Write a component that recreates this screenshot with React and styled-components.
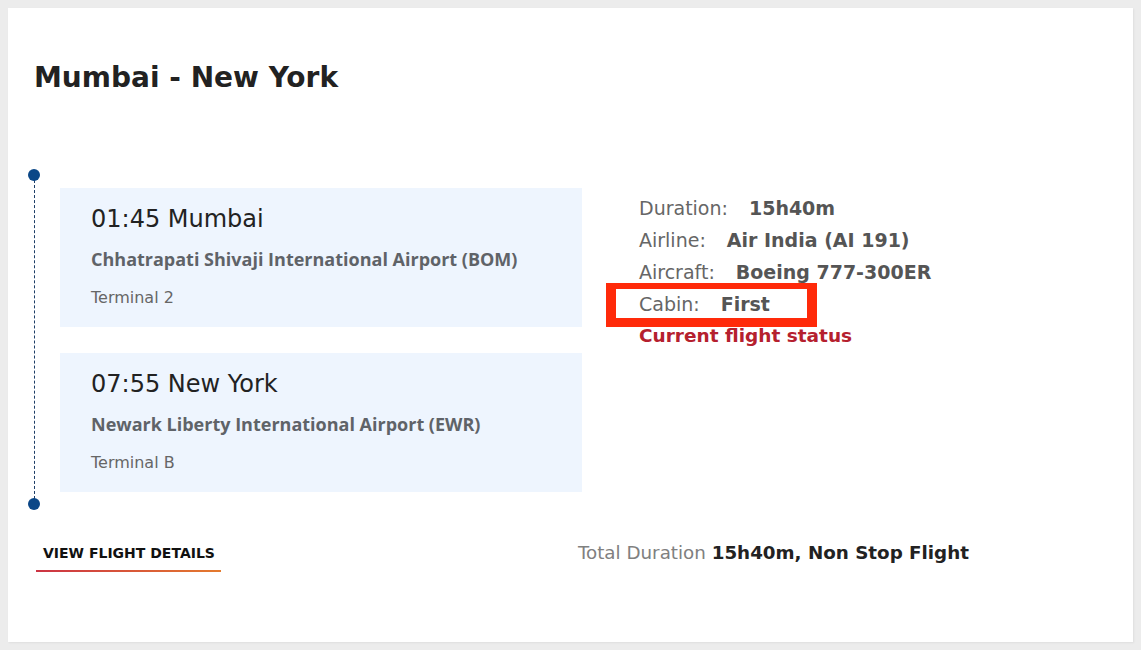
import styled, { createGlobalStyle } from "styled-components";

const Global = createGlobalStyle`
    html, body {
        margin: 0;
        padding: 0;
        background: #ececec;
    }
    body {
        font-family: "DejaVu Sans", "Inter", sans-serif;
    }
`;

const Page = styled.div`
    padding: 8px;
    height: 650px;
    box-sizing: border-box;
`;

const Card = styled.section`
    background: #fff;
    height: 634px;
    box-sizing: border-box;
    padding: 50px 26px 0 26px;
    box-shadow: 1px 1px 2px rgba(0,0,0,0.06);
`;

const Title = styled.h1`
    margin: 0;
    font-size: 28px;
    line-height: 40px;
    font-weight: 700;
    color: #222;
`;

const Body = styled.div`
    display: flex;
    margin-top: 71px;
`;

const Route = styled.div`
    position: relative;
    width: 548px;
    box-sizing: border-box;
    padding: 19px 0 18px 26px;
    display: flex;
    flex-direction: column;
    gap: 26px;

    &::before {
        content: "";
        position: absolute;
        left: -0.5px;
        top: 6px;
        bottom: 6px;
        border-left: 1px dashed #1d3d66;
    }
`;

const Dot = styled.span`
    position: absolute;
    left: -6px;
    ${p => (p.$end ? "bottom: 0;" : "top: 0;")}
    width: 12px;
    height: 12px;
    border-radius: 50%;
    background: #0b4787;
`;

const Stop = styled.div`
    background: #eef5fe;
    height: 139px;
    box-sizing: border-box;
    padding: 15px 31px 0 31px;
`;

const Time = styled.div`
    font-size: 24px;
    line-height: 32px;
    color: #222;
    font-weight: 400;
`;

const Airport = styled.div`
    margin-top: 11px;
    font-family: "Open Sans", sans-serif;
    font-size: 18px;
    line-height: 26px;
    font-weight: 700;
    color: #5f6368;
`;

const Terminal = styled.div`
    margin-top: 15px;
    font-size: 16px;
    line-height: 22px;
    color: #666;
`;

const Details = styled.div`
    position: relative;
    margin-left: 57px;
    padding-top: 23px;
    display: flex;
    flex-direction: column;
`;

const Row = styled.div`
    font-size: 19px;
    line-height: 32px;
    color: #666;
`;

const Value = styled.b`
    margin-left: 21px;
    font-weight: 700;
    color: #555;
`;

const Status = styled.a`
    font-size: 18.5px;
    line-height: 32px;
    font-weight: 700;
    color: #b5202e;
    text-decoration: none;
`;

const Highlight = styled.span`
    position: absolute;
    left: -33px;
    top: 114px;
    width: 211px;
    height: 44px;
    box-sizing: border-box;
    border-style: solid;
    border-color: #ff2a0a;
    border-width: 6px 10px 9px 10px;
    pointer-events: none;
`;

const Footer = styled.div`
    display: flex;
    align-items: flex-start;
    margin-top: 34px;
`;

const DetailsLink = styled.a`
    margin-left: 2px;
    padding: 0 6px 10px 7px;
    font-size: 14px;
    line-height: 18px;
    font-weight: 700;
    color: #111;
    text-transform: uppercase;
    text-decoration: none;
    background: linear-gradient(90deg, #cc3344, #e47a2e) bottom / 100% 2px no-repeat;
`;

const Total = styled.div`
    margin-left: 357px;
    margin-top: -4px;
    font-size: 18.3px;
    line-height: 26px;
    color: #808080;
    font-weight: 400;

    b {
        font-weight: 700;
        color: #222;
    }
`;

const stops = [
    { time: "01:45", city: "Mumbai", airport: "Chhatrapati Shivaji International Airport (BOM)", terminal: "Terminal 2" },
    { time: "07:55", city: "New York", airport: "Newark Liberty International Airport (EWR)", terminal: "Terminal B" },
];

const facts = [
    ["Duration:", "15h40m"],
    ["Airline:", "Air India (AI 191)"],
    ["Aircraft:", "Boeing 777-300ER"],
    ["Cabin:", "First"],
];

export default function App() {
    return (
        <Page>
            <Global />
            <Card>
                <Title>Mumbai - New York</Title>
                <Body>
                    <Route>
                        <Dot />
                        {stops.map(s => (
                            <Stop key={s.time}>
                                <Time>{s.time} {s.city}</Time>
                                <Airport>{s.airport}</Airport>
                                <Terminal>{s.terminal}</Terminal>
                            </Stop>
                        ))}
                        <Dot $end />
                    </Route>
                    <Details>
                        {facts.map(([k, v]) => (
                            <Row key={k}>{k}<Value>{v}</Value></Row>
                        ))}
                        <Status href="#">Current flight status</Status>
                        <Highlight />
                    </Details>
                </Body>
                <Footer>
                    <DetailsLink href="#">View flight details</DetailsLink>
                    <Total>Total Duration <b>15h40m, Non Stop Flight</b></Total>
                </Footer>
            </Card>
        </Page>
    );
}
